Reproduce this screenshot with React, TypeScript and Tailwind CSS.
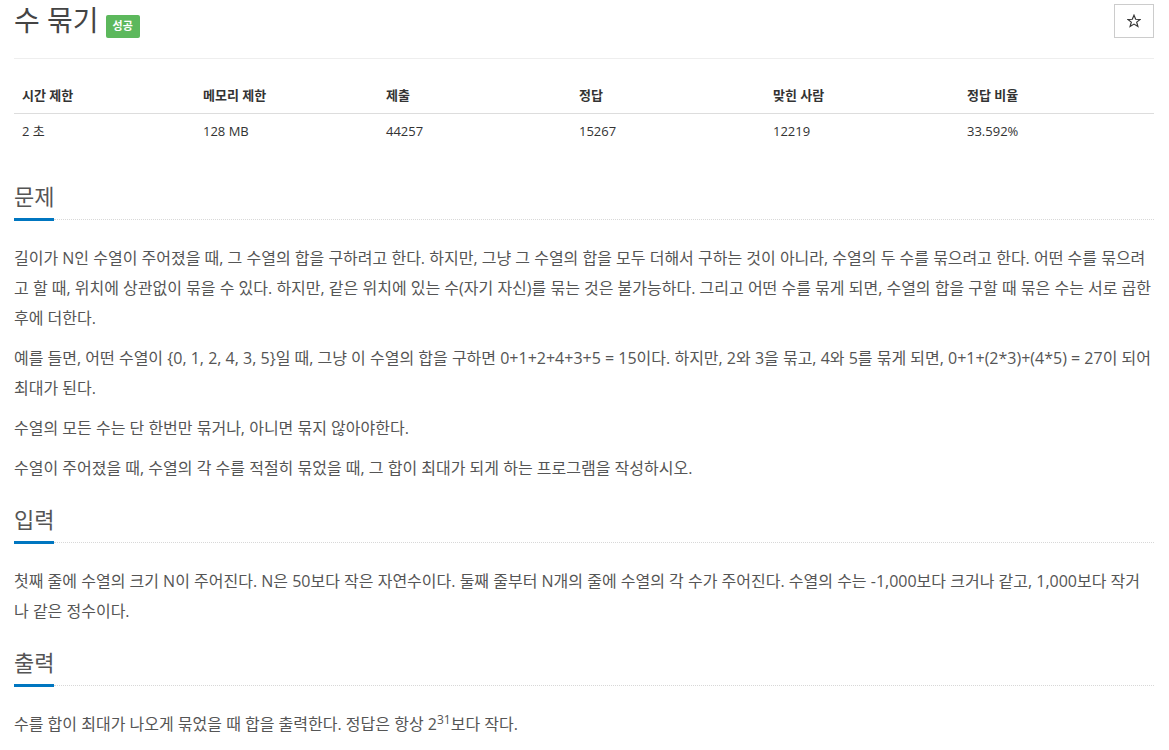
import type { ReactNode } from 'react'

const font = { fontFamily: '"Open Sans", "Noto Sans CJK KR", sans-serif' }

const stats = [
  ['시간 제한', '2 초'],
  ['메모리 제한', '128 MB'],
  ['제출', '44257'],
  ['정답', '15267'],
  ['맞힌 사람', '12219'],
  ['정답 비율', '33.592%'],
]

function Headline({ title }: { title: string }) {
  return (
    <div className="flex items-end">
      <h2 className="text-[22px] leading-[24px] pb-[10px] border-b-[3px] border-[#0076c0] text-[#555] font-normal">
        {title}
      </h2>
      <div className="flex-1 border-b border-dotted border-[#d8d8d8] mb-[1px]" />
    </div>
  )
}

function Section({ title, first, children }: { title: string; first?: boolean; children: ReactNode }) {
  return (
    <section className={first ? 'mt-[35px]' : 'mt-[24px]'}>
      <Headline title={title} />
      <div className="mt-[22px] text-[16px] leading-[30px] text-[#555]">{children}</div>
    </section>
  )
}

function P({ children }: { children: ReactNode }) {
  return <p className="mb-[10px]">{children}</p>
}

export default function App() {
  return (
    <div className="min-h-screen bg-white pl-[14px] pr-[15px]" style={font}>
      <div className="flex items-start justify-between h-[40px]">
        <div className="flex items-start">
          <h1 className="text-[28px] leading-[40px] text-[#444] font-normal">수 묶기</h1>
          <span className="ml-[7px] mt-[15px] h-[23px] px-[7px] flex items-center rounded-[2px] bg-[#5cb85c] text-white text-[11px] font-bold">
            성공
          </span>
        </div>
        <button className="mt-[4px] w-[40px] h-[34px] border border-[#ccc] flex items-center justify-center bg-white">
          <svg width="14" height="14" viewBox="0 0 24 24" fill="none" stroke="#333" strokeWidth="2" strokeLinejoin="miter">
            <polygon points="12,2 14.9,9 22.5,9.3 16.6,14 18.7,21.5 12,17.3 5.3,21.5 7.4,14 1.5,9.3 9.1,9" />
          </svg>
        </button>
      </div>

      <div className="mt-[18px] border-t border-[#eee]" />

      <div className="mt-[18px] text-[13px] text-[#333]">
        <div className="grid grid-cols-[181px_183px_193px_194px_194px_1fr] border-b border-[#ddd]">
          {stats.map(([head]) => (
            <div key={head} className="px-2 pt-2 pb-[8px] leading-[20px] font-bold">
              {head}
            </div>
          ))}
        </div>
        <div className="grid grid-cols-[181px_183px_193px_194px_194px_1fr]">
          {stats.map(([head, value]) => (
            <div key={head} className="px-2 pt-[7px] pb-2 leading-[20px]">
              {value}
            </div>
          ))}
        </div>
      </div>

      <Section title="문제" first>
        <P>
          길이가 N인 수열이 주어졌을 때, 그 수열의 합을 구하려고 한다. 하지만, 그냥 그 수열의 합을 모두 더해서 구하는 것이 아니라, 수열의 두 수를 묶으려고 한다. 어떤 수를 묶으려고 할 때, 위치에 상관없이 묶을 수 있다. 하지만, 같은 위치에 있는 수(자기 자신)를 묶는 것은 불가능하다. 그리고 어떤 수를 묶게 되면, 수열의 합을 구할 때 묶은 수는 서로 곱한 후에 더한다.
        </P>
        <P>
          예를 들면, 어떤 수열이 {'{0, 1, 2, 4, 3, 5}'}일 때, 그냥 이 수열의 합을 구하면 0+1+2+4+3+5 = 15이다. 하지만, 2와 3을 묶고, 4와 5를 묶게 되면, 0+1+(2*3)+(4*5) = 27이 되어 최대가 된다.
        </P>
        <P>수열의 모든 수는 단 한번만 묶거나, 아니면 묶지 않아야한다.</P>
        <P>수열이 주어졌을 때, 수열의 각 수를 적절히 묶었을 때, 그 합이 최대가 되게 하는 프로그램을 작성하시오.</P>
      </Section>

      <Section title="입력">
        <P>
          첫째 줄에 수열의 크기 N이 주어진다. N은 50보다 작은 자연수이다. 둘째 줄부터 N개의 줄에 수열의 각 수가 주어진다. 수열의 수는 -1,000보다 크거나 같고, 1,000보다 작거나 같은 정수이다.
        </P>
      </Section>

      <Section title="출력">
        <P>
          수를 합이 최대가 나오게 묶었을 때 합을 출력한다. 정답은 항상 2<sup>31</sup>보다 작다.
        </P>
      </Section>
    </div>
  )
}
